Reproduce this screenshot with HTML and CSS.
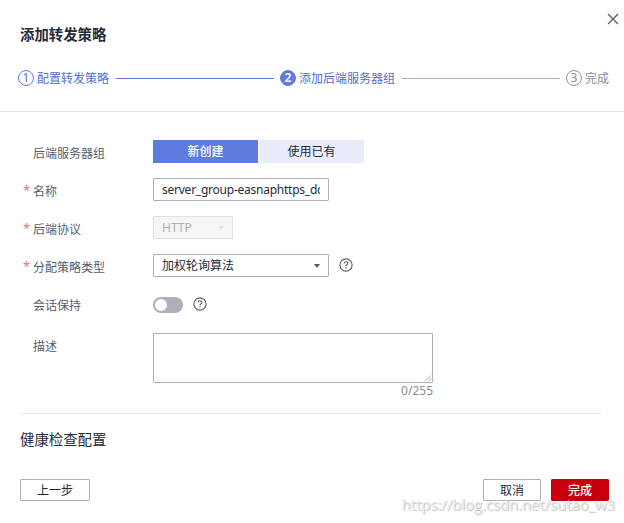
FILE: index.html
```html
<!DOCTYPE html>
<html lang="zh-CN">
<head>
<meta charset="UTF-8">
<title>添加转发策略</title>
<link rel="stylesheet" href="styles.css">
</head>
<body>
<main class="dialog">
  <header class="header">
    <svg class="close" viewBox="0 0 12 12"><path d="M1 1l10 10M11 1L1 11"/></svg>
    <h1 class="title">添加转发策略</h1>
    <div class="steps">
      <span class="num">1</span><span class="step">配置转发策略</span>
      <span class="line"></span>
      <span class="num current">2</span><span class="step">添加后端服务器组</span>
      <span class="line pending"></span>
      <span class="num pending">3</span><span class="step pending">完成</span>
    </div>
  </header>
  <section class="form">
    <div class="row">
      <label class="label">后端服务器组</label>
      <div class="tabs"><span class="tab selected">新创建</span><span class="tab">使用已有</span></div>
    </div>
    <div class="row">
      <label class="label required">名称</label>
      <div class="box name"><span class="clip">server_group-easnaphttps_do</span></div>
    </div>
    <div class="row">
      <label class="label required">后端协议</label>
      <div class="box select disabled"><span>HTTP</span><i class="arrow"></i></div>
    </div>
    <div class="row">
      <label class="label required">分配策略类型</label>
      <div class="box select"><span>加权轮询算法</span><i class="arrow"></i></div>
      <svg class="help" viewBox="0 0 14 14"><circle cx="7" cy="7" r="6.1"/><path d="M5.1 5.6C5.1 3.2 8.9 3.2 8.9 5.5C8.9 6.8 7 6.7 7 8.3M7 9.3v1.2"/></svg>
    </div>
    <div class="row session">
      <label class="label">会话保持</label>
      <span class="switch"><i class="knob"></i></span>
      <svg class="help" viewBox="0 0 14 14"><circle cx="7" cy="7" r="6.1"/><path d="M5.1 5.6C5.1 3.2 8.9 3.2 8.9 5.5C8.9 6.8 7 6.7 7 8.3M7 9.3v1.2"/></svg>
    </div>
    <div class="row description">
      <label class="label">描述</label>
      <div class="area-wrap">
        <div class="area"><svg class="grip" viewBox="0 0 8 8"><path d="M1 7.5L7 1.5M4.5 7.5L7.5 4.5"/></svg></div>
        <div class="count">0/255</div>
      </div>
    </div>
  </section>
  <h2 class="subtitle">健康检查配置</h2>
  <footer class="footer">
    <span class="button back">上一步</span>
    <span class="button">取消</span>
    <span class="button primary">完成</span>
  </footer>
  <div class="watermark">https://blog.csdn.net/sutao_w3</div>
</main>
</body>
</html>
```
FILE: styles.css
```css
* { box-sizing: border-box; }
body {
  margin: 0;
  background: #fff;
  color: #252b3a;
  font: 12px/18px "Noto Sans", "Noto Sans CJK SC", sans-serif;
}
.dialog { position: relative; width: 624px; height: 523px; overflow: hidden; }
.header { height: 112px; padding: 24px 15px 0 18px; border-bottom: 1px solid #dfe1e6; }
.close {
  position: absolute; top: 13px; right: 5px; width: 12px; height: 12px;
  fill: none; stroke: #575d6c; stroke-width: 1.3;
}
.title { margin: 0 0 0 2px; font-size: 14.4px; line-height: 21px; font-weight: 700; }
.steps { display: flex; align-items: center; height: 18px; margin-top: 24px; color: #526ecc; }
.num {
  display: flex; align-items: center; justify-content: center;
  flex: none; width: 16px; height: 16px; margin-right: 3px;
  border: 1px solid #5e7ce0; border-radius: 50%; line-height: 14px;
}
.num.current { background: #5e7ce0; color: #fff; font-weight: 600; }
.num.pending { border-color: #8a8e99; }
.step { flex: none; padding-top: 2px; }
.pending { color: #8a8e99; }
.line { flex: 1; height: 1px; margin: 0 6px 0 7px; background: #5e7ce0; }
.line.pending { background: #adb0b8; }

.form { display: flex; flex-direction: column; gap: 15px; margin: 0 23px 0 20px; padding-top: 28px; height: 302px; border-bottom: 1px solid #ebecf0; }
.row { display: flex; height: 23px; }
.label { position: relative; flex: none; width: 133px; padding: 5px 0 0 13px; color: #575d6c; }
.required::before { content: "*"; position: absolute; left: 3px; top: 3px; color: #f66f6a; font-size: 13px; }
.tabs { display: flex; gap: 1px; }
.tab { width: 105px; line-height: 23px; text-align: center; background: #e9edfa; }
.tab.selected { background: #5e7ce0; color: #fff; font-weight: 500; }
.box { display: flex; align-items: center; width: 176px; height: 23px; padding: 0 8px; border: 1px solid #adb0b8; border-radius: 1px; }
.name { letter-spacing: -.24px; }
.clip { overflow: hidden; white-space: nowrap; }
.select { justify-content: space-between; }
.disabled { width: 80px; border-color: #dfe1e6; background: #f5f5f6; color: #adb0b8; }
.arrow { border: 3px solid transparent; border-top: 4px solid #575d6c; border-bottom: 0; }
.disabled .arrow { border-top-color: #dfe1e6; }
.help { width: 14px; height: 14px; margin: 4px 0 0 10px; fill: none; stroke: #575d6c; stroke-width: 1.1; }
.session .help { margin-top: 5px; }
.switch { display: flex; align-items: center; width: 30px; height: 16px; margin-top: 5px; padding-left: 2px; border-radius: 8px; background: #adb0b8; }
.knob { width: 12px; height: 12px; border-radius: 50%; background: #fff; }
.description { height: auto; margin-top: 3px; }
.area-wrap { width: 280px; }
.area { display: flex; align-items: flex-end; justify-content: flex-end; height: 50px; border: 1px solid #adb0b8; border-radius: 1px; }
.grip { width: 8px; height: 8px; fill: none; stroke: #8a8e99; stroke-width: .7; }
.count { margin-top: -1px; text-align: right; color: #8a8e99; }
.subtitle { margin: 16px 0 0 20px; font-size: 14.4px; line-height: 20px; font-weight: 400; }
.footer { display: flex; gap: 10px; margin: 29px 15px 0 20px; }
.button { width: 58px; height: 22px; border: 1px solid #adb0b8; border-radius: 1px; line-height: 22px; text-align: center; }
.back { width: 70px; margin-right: auto; }
.primary { border-color: #c7000b; background: #c7000b; color: #fff; font-weight: 500; }
.watermark {
  position: absolute; right: 9px; top: 494px;
  font: 14.8px/20px "Open Sans", sans-serif; white-space: nowrap;
  color: rgba(255, 255, 255, .7);
  text-shadow: 1px 1px 1px rgba(110, 110, 110, .4), 0 0 1px rgba(130, 130, 130, .35);
}
```
